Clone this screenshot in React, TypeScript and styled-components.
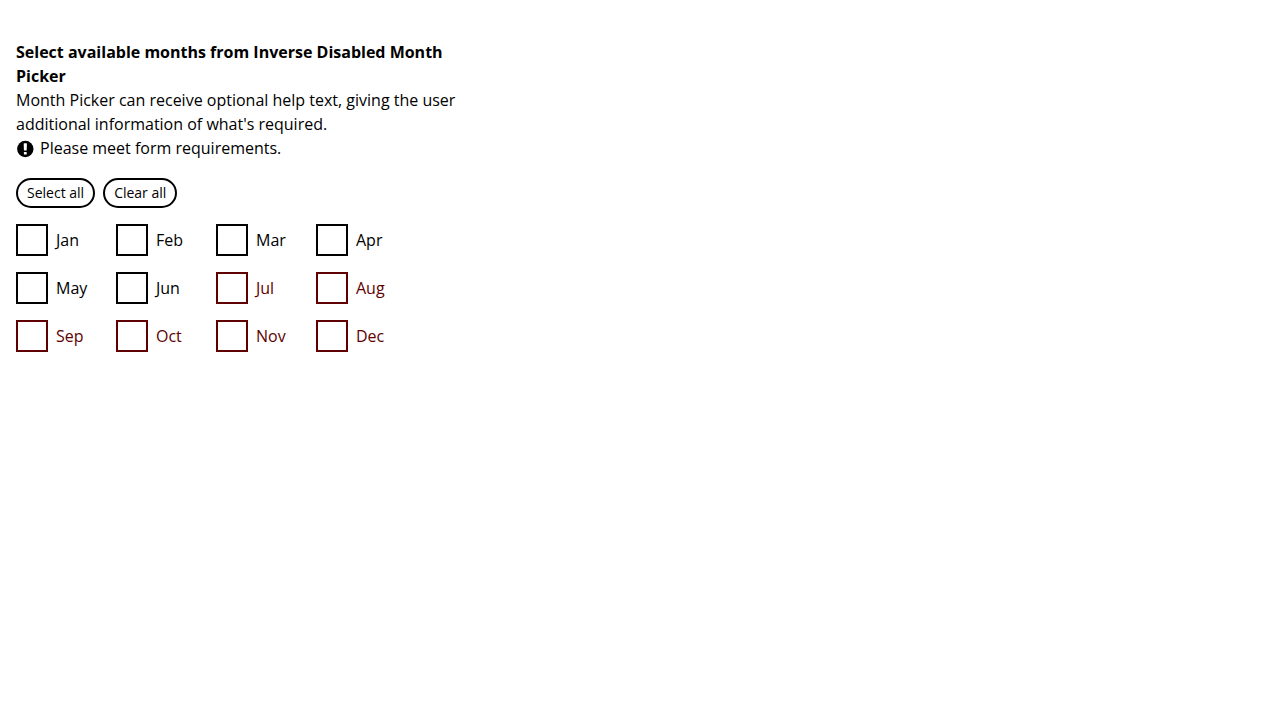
import React, { useState } from "react";
import styled, { createGlobalStyle } from "styled-components";

const GlobalStyle = createGlobalStyle`
  *, *::before, *::after { box-sizing: border-box; }
  body {
    margin: 0;
    background: #fff;
    color: #000;
    font-family: "Open Sans", "Noto Sans", sans-serif;
    font-size: 16px;
    line-height: 24px;
  }
`;

const Page = styled.main`
  padding: 40px 16px 16px;
`;

const Picker = styled.fieldset`
  max-width: 460px;
  min-width: 0;
  margin: 0;
  padding: 0;
  border: 0;
`;

const Legend = styled.legend`
  padding: 0;
  font-weight: 700;
`;

const HelpText = styled.p`
  margin: 0;
`;

const ErrorText = styled.p`
  display: flex;
  align-items: center;
  gap: 6px;
  margin: 0;
`;

const ErrorIcon = styled.svg`
  flex: none;
  width: 18px;
  height: 20px;
`;

const Actions = styled.div`
  display: flex;
  flex-wrap: wrap;
  gap: 8px;
  margin: 18px 0 16px;
`;

const PillButton = styled.button`
  height: 30px;
  padding: 0 9px;
  border: 2px solid #000;
  border-radius: 15px;
  background: #fff;
  color: #000;
  font: inherit;
  font-size: 14px;
  line-height: 22px;
  cursor: pointer;
`;

const MonthGrid = styled.div`
  display: grid;
  grid-template-columns: repeat(auto-fill, 84px);
  gap: 16px;
`;

const MonthLabel = styled.label<{ $disabled: boolean }>`
  display: flex;
  align-items: center;
  gap: 8px;
  color: ${(p) => (p.$disabled ? "#5e0000" : "#000")};
`;

const Checkbox = styled.input`
  appearance: none;
  flex: none;
  width: 32px;
  height: 32px;
  margin: 0;
  border: 2px solid currentColor;
  background: #fff;
  color: inherit;

  &:checked {
    background: currentColor;
    box-shadow: inset 0 0 0 5px #fff;
  }
`;

const months = ["Jan", "Feb", "Mar", "Apr", "May", "Jun", "Jul", "Aug", "Sep", "Oct", "Nov", "Dec"];
const available = months.slice(0, 6);

export default function App() {
  const [selected, setSelected] = useState<string[]>([]);

  const toggle = (month: string) =>
    setSelected((now) => (now.includes(month) ? now.filter((m) => m !== month) : [...now, month]));

  return (
    <>
      <GlobalStyle />
      <Page>
        <Picker aria-describedby="month-help month-error">
          <Legend>Select available months from Inverse Disabled Month Picker</Legend>
          <HelpText id="month-help">
            Month Picker can receive optional help text, giving the user additional information of what's required.
          </HelpText>
          <ErrorText id="month-error">
            <ErrorIcon viewBox="0 0 18 20" aria-hidden="true">
              <circle cx="9.3" cy="11" r="8.2" fill="#000" />
              <path d="M7.7 5.8q0-.5.5-.5h2.2q.5 0 .5.5l-.2 6.3q0 .5-.5.5H8.4q-.5 0-.5-.5z" fill="#fff" />
              <rect x="7.9" y="14" width="2.8" height="2.4" rx=".5" fill="#fff" />
            </ErrorIcon>
            Please meet form requirements.
          </ErrorText>
          <Actions>
            <PillButton type="button" onClick={() => setSelected(available)}>Select all</PillButton>
            <PillButton type="button" onClick={() => setSelected([])}>Clear all</PillButton>
          </Actions>
          <MonthGrid>
            {months.map((month) => {
              const disabled = !available.includes(month);
              return (
                <MonthLabel key={month} $disabled={disabled}>
                  <Checkbox
                    type="checkbox"
                    name="months"
                    value={month}
                    disabled={disabled}
                    checked={selected.includes(month)}
                    onChange={() => toggle(month)}
                  />
                  {month}
                </MonthLabel>
              );
            })}
          </MonthGrid>
        </Picker>
      </Page>
    </>
  );
}
